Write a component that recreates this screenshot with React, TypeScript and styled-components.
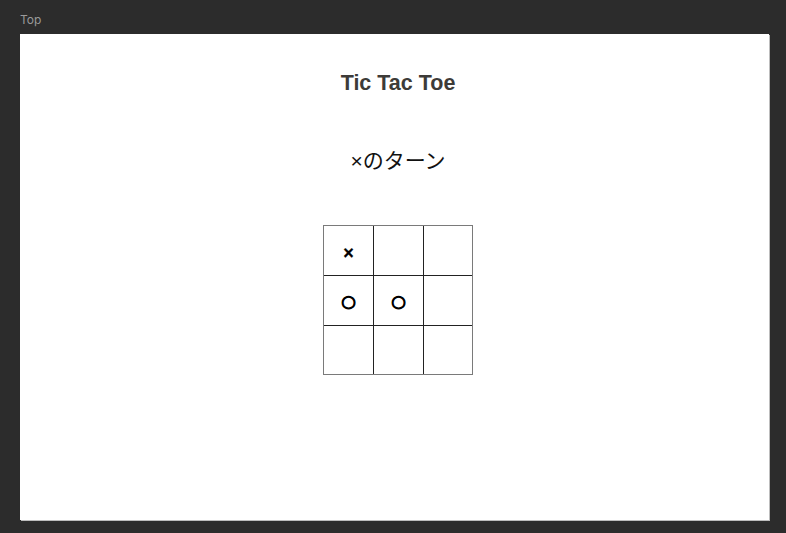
import React from 'react';
import styled, { createGlobalStyle } from 'styled-components';

const GlobalStyle = createGlobalStyle`
  html, body {
    margin: 0;
    padding: 0;
    background-color: #2c2c2c;
  }
`;

const Canvas = styled.div`
  display: flex;
  flex-direction: column;
  padding: 12px 0 0 20px;
  min-height: 533px;
  box-sizing: border-box;
`;

const FrameLabel = styled.div`
  font-family: Inter, 'Liberation Sans', sans-serif;
  font-size: 12px;
  line-height: 16px;
  color: #9a9a9a;
  margin-bottom: 6px;
`;

const Frame = styled.main`
  display: flex;
  flex-direction: column;
  align-items: center;
  width: 749px;
  height: 486px;
  padding: 37px 0 0 7px;
  box-sizing: border-box;
  background-color: white;
  box-shadow: 1px 1px 0 0 #bdbdbd;
`;

const Title = styled.h1`
  margin: 0;
  font-family: 'Liberation Sans', Arial, sans-serif;
  font-weight: 700;
  font-size: 21.5px;
  line-height: 24px;
  color: #3d3b38;
`;

const Turn = styled.p`
  margin: 54px 0 0;
  font-family: 'Liberation Sans', 'Noto Sans CJK JP', sans-serif;
  font-size: 21px;
  line-height: 24px;
  color: #111;
`;

const Board = styled.div`
  display: grid;
  grid-template-columns: 49px 49px 48px;
  grid-template-rows: 49px 49px 48px;
  gap: 1px;
  margin-top: 52px;
  border: 1px solid #7a7a7a;
  background-color: #222;
`;

const Cell = styled.button<{ $mark: string }>`
  display: flex;
  align-items: center;
  justify-content: center;
  padding: 4px 0 0;
  margin: 0;
  border: none;
  background-color: white;
  color: #000;
  font-family: ${(p) =>
    p.$mark === '×' ? "'Liberation Sans', Arial, sans-serif" : "'DejaVu Sans', sans-serif"};
  font-weight: 700;
  font-size: ${(p) => (p.$mark === '×' ? '18px' : '16.5px')};
  line-height: 1;
  -webkit-text-stroke: ${(p) => (p.$mark === '○' ? '1.1px #000' : '0.3px #000')};
`;

const cells = ['×', '', '', '○', '○', '', '', '', ''];

const App = () => {
  return (
    <>
      <GlobalStyle />
      <Canvas>
        <FrameLabel>Top</FrameLabel>
        <Frame>
          <Title>Tic Tac Toe</Title>
          <Turn>×のターン</Turn>
          <Board>
            {cells.map((mark, i) => (
              <Cell key={i} $mark={mark}>
                {mark}
              </Cell>
            ))}
          </Board>
        </Frame>
      </Canvas>
    </>
  );
};

export default App;
